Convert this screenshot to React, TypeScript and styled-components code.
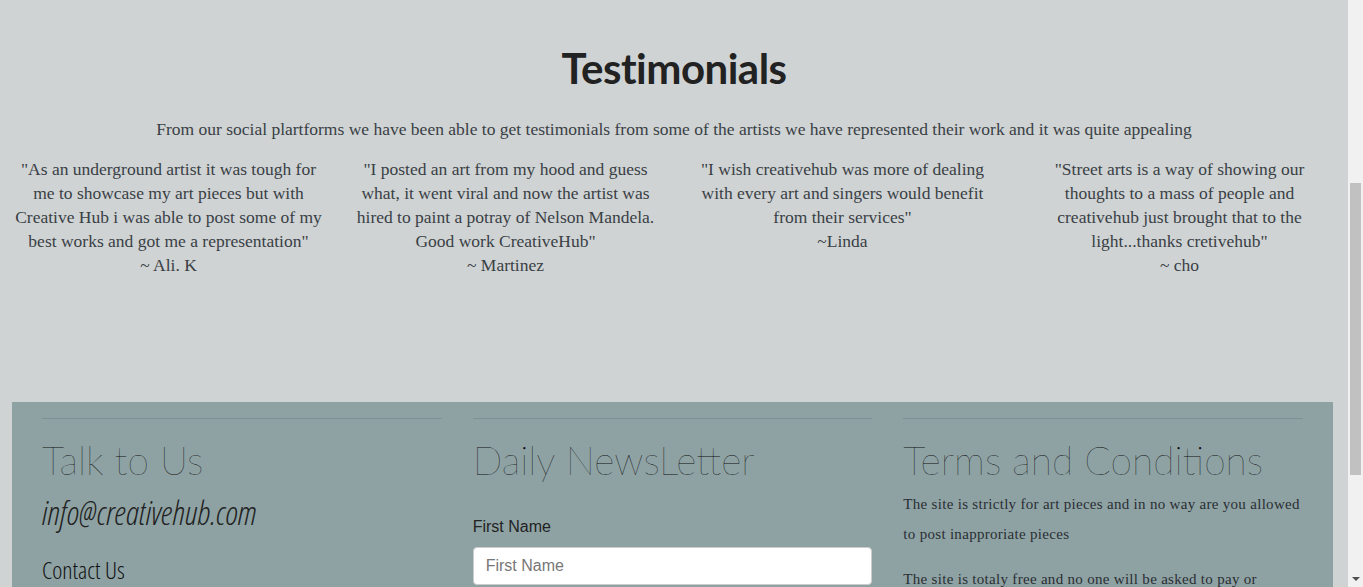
import React from "react";
import styled, { createGlobalStyle } from "styled-components";

const Global = createGlobalStyle`
  html, body { margin: 0; padding: 0; overflow: hidden; }
  body { background: #cfd3d4; font-family: "Liberation Serif", serif; color: #333; }
`;

const Viewport = styled.div`
  display: flex;
  height: 587px;
  overflow: hidden;
`;

const Main = styled.main`
  flex: 0 0 1348px;
  width: 1348px;
`;

const ScrollTrack = styled.div`
  flex: 0 0 15px;
  background: #f1f1f1;
  display: flex;
  flex-direction: column;
  align-items: center;
  padding-top: 183px;
  padding-bottom: 6px;
  box-sizing: border-box;
`;

const Thumb = styled.div`
  width: 11px;
  height: 292px;
  background: #c1c1c1;
`;

const TrackFill = styled.div`
  flex: 1;
`;

const Arrow = styled.div`
  width: 0;
  height: 0;
  border-left: 4px solid transparent;
  border-right: 4px solid transparent;
  border-top: 4px solid #505050;
`;

const Testimonials = styled.section`
  padding-top: 44px;
  height: 402px;
  box-sizing: border-box;
`;

const Title = styled.h2`
  margin: 0;
  text-align: center;
  font-family: "Lato", sans-serif;
  font-weight: 700;
  font-size: 42px;
  line-height: 48px;
  color: #222;
  letter-spacing: -0.5px;
`;

const Lead = styled.p`
  margin: 25px 0 0;
  text-align: center;
  font-size: 17.5px;
  line-height: 24px;
  color: #3a3f45;
`;

const Quotes = styled.div`
  display: grid;
  grid-template-columns: repeat(4, 1fr);
  margin-top: 16px;
`;

const Quote = styled.div`
  text-align: center;
  font-size: 17.5px;
  line-height: 24px;
  color: #3a3f45;
  white-space: nowrap;
`;

const Line = styled.span`
  display: block;
`;

const Footer = styled.footer`
  margin: 0 15px 0 12px;
  background: #8ea2a4;
  padding: 16px 30px 60px;
  display: grid;
  grid-template-columns: repeat(3, 1fr);
  column-gap: 31px;
`;

const Col = styled.div`
  border-top: 1px solid #7b9194;
  padding-top: 16px;
`;

const ColTitle = styled.h3`
  margin: 0;
  font-family: "Lato", sans-serif;
  font-weight: 100;
  font-size: 39px;
  line-height: 50px;
  color: #0e0e0e;
  white-space: nowrap;
`;

const Email = styled.div`
  margin-top: 8px;
  font-family: "Open Sans", sans-serif;
  font-style: italic;
  font-weight: 300;
  font-stretch: 75%;
  font-size: 33px;
  line-height: 40px;
  color: #222;
`;

const Contact = styled.div`
  margin-top: 20px;
  font-family: "Open Sans", sans-serif;
  font-weight: 300;
  font-stretch: 75%;
  font-size: 24px;
  line-height: 34px;
  color: #111;
`;

const Label = styled.label`
  display: block;
  margin-top: 31px;
  margin-bottom: 9px;
  font-family: "Liberation Sans", sans-serif;
  font-size: 16px;
  line-height: 22px;
  color: #222;
`;

const Input = styled.input`
  display: block;
  box-sizing: border-box;
  width: 100%;
  height: 38px;
  padding: 6px 12px;
  border: 1px solid #ccc;
  border-radius: 4px;
  background: #fff;
  font-family: "Liberation Sans", sans-serif;
  font-size: 16px;
  color: #555;
  &::placeholder { color: #777; }
`;

const Button = styled.button`
  margin-top: 16px;
  padding: 8px 18px;
  border: 0;
  border-radius: 4px;
  background: #333;
  color: #fff;
  font-family: "Liberation Sans", sans-serif;
  font-size: 16px;
`;

const Terms = styled.p`
  margin: 4px 0 15px;
  font-family: "Liberation Serif", serif;
  font-size: 15px;
  line-height: 30px;
  letter-spacing: 0.3px;
  color: #2a2e33;
`;

const quotes = [
  {
    lines: [
      '"As an underground artist it was tough for',
      "me to showcase my art pieces but with",
      "Creative Hub i was able to post some of my",
      'best works and got me a representation"',
    ],
    by: "~ Ali. K",
  },
  {
    lines: [
      '"I posted an art from my hood and guess',
      "what, it went viral and now the artist was",
      "hired to paint a potray of Nelson Mandela.",
      'Good work CreativeHub"',
    ],
    by: "~ Martinez",
  },
  {
    lines: [
      '"I wish creativehub was more of dealing',
      "with every art and singers would benefit",
      'from their services"',
    ],
    by: "~Linda",
  },
  {
    lines: [
      '"Street arts is a way of showing our',
      "thoughts to a mass of people and",
      "creativehub just brought that to the",
      'light...thanks cretivehub"',
    ],
    by: "~ cho",
  },
];

export default function App() {
  return (
    <Viewport>
      <Global />
      <Main>
        <Testimonials>
          <Title>Testimonials</Title>
          <Lead>
            From our social plartforms we have been able to get testimonials from some of the artists we have represented their work and it was quite appealing
          </Lead>
          <Quotes>
            {quotes.map((q) => (
              <Quote key={q.by}>
                {q.lines.map((l) => (
                  <Line key={l}>{l}</Line>
                ))}
                <Line>{q.by}</Line>
              </Quote>
            ))}
          </Quotes>
        </Testimonials>
        <Footer>
          <Col>
            <ColTitle>Talk to Us</ColTitle>
            <Email>info@creativehub.com</Email>
            <Contact>Contact Us</Contact>
          </Col>
          <Col>
            <ColTitle>Daily NewsLetter</ColTitle>
            <Label htmlFor="fn">First Name</Label>
            <Input id="fn" placeholder="First Name" />
            <Label htmlFor="em">Email</Label>
            <Input id="em" placeholder="Email" />
            <Button>Subscribe</Button>
          </Col>
          <Col>
            <ColTitle>Terms and Conditions</ColTitle>
            <Terms>The site is strictly for art pieces and in no way are you allowed to post inapproriate pieces</Terms>
            <Terms>The site is totaly free and no one will be asked to pay or subscribe to any plan in order to post their work</Terms>
          </Col>
        </Footer>
      </Main>
      <ScrollTrack>
        <Thumb />
        <TrackFill />
        <Arrow />
      </ScrollTrack>
    </Viewport>
  );
}
